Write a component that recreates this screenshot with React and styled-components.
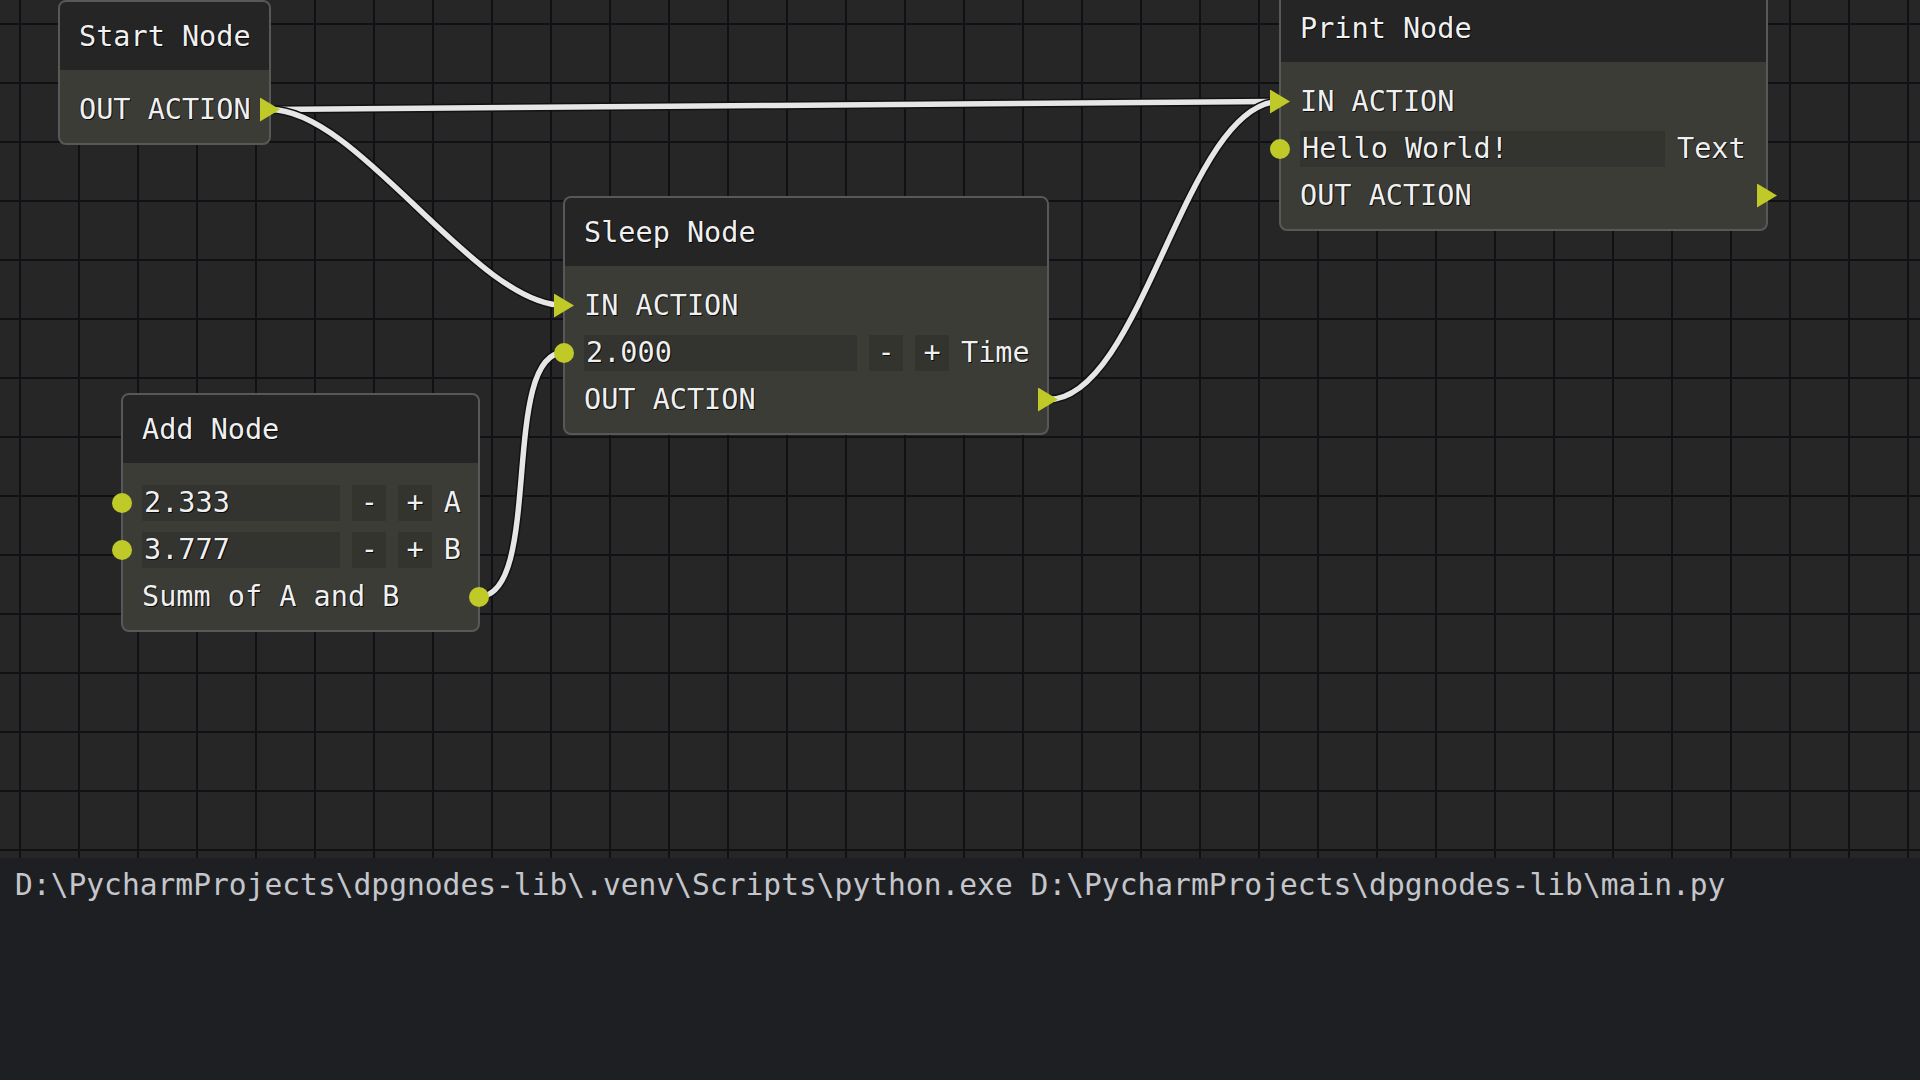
import React from 'react'
import styled, { createGlobalStyle } from 'styled-components'

const GlobalStyle = createGlobalStyle`
  html, body {
    margin: 0;
    padding: 0;
    background: #1e1f22;
    overflow: hidden;
  }
`

const Page = styled.div`
  height: 100vh;
  display: flex;
  flex-direction: column;
`

const Canvas = styled.div`
  position: relative;
  flex: none;
  height: 858px;
  overflow: hidden;
  background-color: #262626;
  background-image:
    linear-gradient(to right, #111115 0 2px, transparent 2px),
    linear-gradient(to bottom, #111115 0 2px, transparent 2px);
  background-size: 59px 59px;
  background-position: 19px 23px;
`

const Links = styled.svg`
  position: absolute;
  inset: 0;
  width: 100%;
  height: 100%;
  pointer-events: none;
`

const Node = styled.div`
  position: absolute;
  left: ${p => p.$x}px;
  top: ${p => p.$y}px;
  width: ${p => p.$w}px;
  box-sizing: border-box;
  border: 2px solid #585858;
  border-radius: 8px;
  background: #3c3c37;
  font-family: "DejaVu Sans Mono", "Liberation Mono", monospace;
  font-size: 28.5px;
  color: #f0f0f0;
  white-space: pre;
  text-shadow: 1px 1px 0 rgba(0, 0, 0, 0.8), -1px 0 0 rgba(0, 0, 0, 0.4);
`

const Header = styled.div`
  height: 68px;
  display: flex;
  align-items: center;
  padding: 0 19px;
  background: #252525;
  border-radius: 6px 6px 0 0;
`

const Body = styled.div`
  display: flex;
  flex-direction: column;
  padding: 16px 0 10px;
`

const Row = styled.div`
  position: relative;
  height: 47px;
  display: flex;
  align-items: center;
  gap: 12px;
  padding: 0 17px 0 19px;
`

const Field = styled.div`
  width: ${p => p.$w}px;
  height: 36px;
  display: flex;
  align-items: center;
  padding-left: 2px;
  box-sizing: border-box;
  background: #33332f;
`

const StepButton = styled.div`
  width: 34px;
  height: 36px;
  display: flex;
  align-items: center;
  justify-content: center;
  background: #34342f;
`

const TrianglePin = styled.span`
  position: absolute;
  top: 50%;
  ${p => (p.$side === 'left' ? 'left' : 'right')}: -11px;
  width: 20px;
  height: 24px;
  margin-top: -12px;
  background: #bfca28;
  clip-path: polygon(0 0, 100% 50%, 0 100%);
`

const CirclePin = styled.span`
  position: absolute;
  top: 50%;
  ${p => (p.$side === 'left' ? 'left' : 'right')}: -11px;
  width: 20px;
  height: 20px;
  margin-top: -10px;
  border-radius: 50%;
  background: #bfca28;
`

const Terminal = styled.div`
  flex: 1;
  background: #1e1f22;
  padding: 9px 15px;
  font-family: "DejaVu Sans Mono", "Liberation Mono", monospace;
  font-size: 29.6px;
  line-height: 36px;
  color: #c4c6cc;
  white-space: pre;
`

// imnodes style bezier: horizontal tangents, offset = 0.25 * link length
const linkPath = ([x1, y1], [x2, y2]) => {
  const len = Math.hypot(x2 - x1, y2 - y1)
  const o = len * 0.25
  return `M ${x1} ${y1} C ${x1 + o} ${y1}, ${x2 - o} ${y2}, ${x2} ${y2}`
}

const pins = {
  startOut: [270, 109.5],
  printIn: [1280, 101.5],
  sleepIn: [564, 305.5],
  sleepTime: [564, 352.5],
  sleepOut: [1048, 399.5],
  addOut: [479, 596.5],
}

const links = [
  ['startOut', 'printIn'],
  ['startOut', 'sleepIn'],
  ['addOut', 'sleepTime'],
  ['sleepOut', 'printIn'],
]

const FloatRow = ({ value, label, width }) => (
  <Row>
    <CirclePin $side="left" />
    <Field $w={width}>{value}</Field>
    <StepButton>-</StepButton>
    <StepButton>+</StepButton>
    <span>{label}</span>
  </Row>
)

const App = () => {
  return (
    <Page>
      <GlobalStyle />
      <Canvas>
        <Links>
          {links.map(([a, b], i) => (
            <g key={i}>
              <path d={linkPath(pins[a], pins[b])} stroke="#121212" strokeWidth="8.5" fill="none" />
              <path d={linkPath(pins[a], pins[b])} stroke="#e6e6e6" strokeWidth="5.5" fill="none" />
            </g>
          ))}
        </Links>

        <Node $x={58} $y={0} $w={213}>
          <Header>Start Node</Header>
          <Body>
            <Row>
              OUT ACTION
              <TrianglePin $side="right" />
            </Row>
          </Body>
        </Node>

        <Node $x={563} $y={196} $w={486}>
          <Header>Sleep Node</Header>
          <Body>
            <Row>
              <TrianglePin $side="left" />
              IN ACTION
            </Row>
            <FloatRow value="2.000" label="Time" width={273} />
            <Row>
              OUT ACTION
              <TrianglePin $side="right" />
            </Row>
          </Body>
        </Node>

        <Node $x={1279} $y={-8} $w={489}>
          <Header>Print Node</Header>
          <Body>
            <Row>
              <TrianglePin $side="left" />
              IN ACTION
            </Row>
            <Row>
              <CirclePin $side="left" />
              <Field $w={365}>Hello World!</Field>
              <span>Text</span>
            </Row>
            <Row>
              OUT ACTION
              <TrianglePin $side="right" />
            </Row>
          </Body>
        </Node>

        <Node $x={121} $y={393} $w={359}>
          <Header>Add Node</Header>
          <Body>
            <FloatRow value="2.333" label="A" width={200} />
            <FloatRow value="3.777" label="B" width={200} />
            <Row>
              Summ of A and B
              <CirclePin $side="right" />
            </Row>
          </Body>
        </Node>
      </Canvas>
      <Terminal>
        {'D:\\PycharmProjects\\dpgnodes-lib\\.venv\\Scripts\\python.exe D:\\PycharmProjects\\dpgnodes-lib\\main.py'}
      </Terminal>
    </Page>
  )
}

export default App
